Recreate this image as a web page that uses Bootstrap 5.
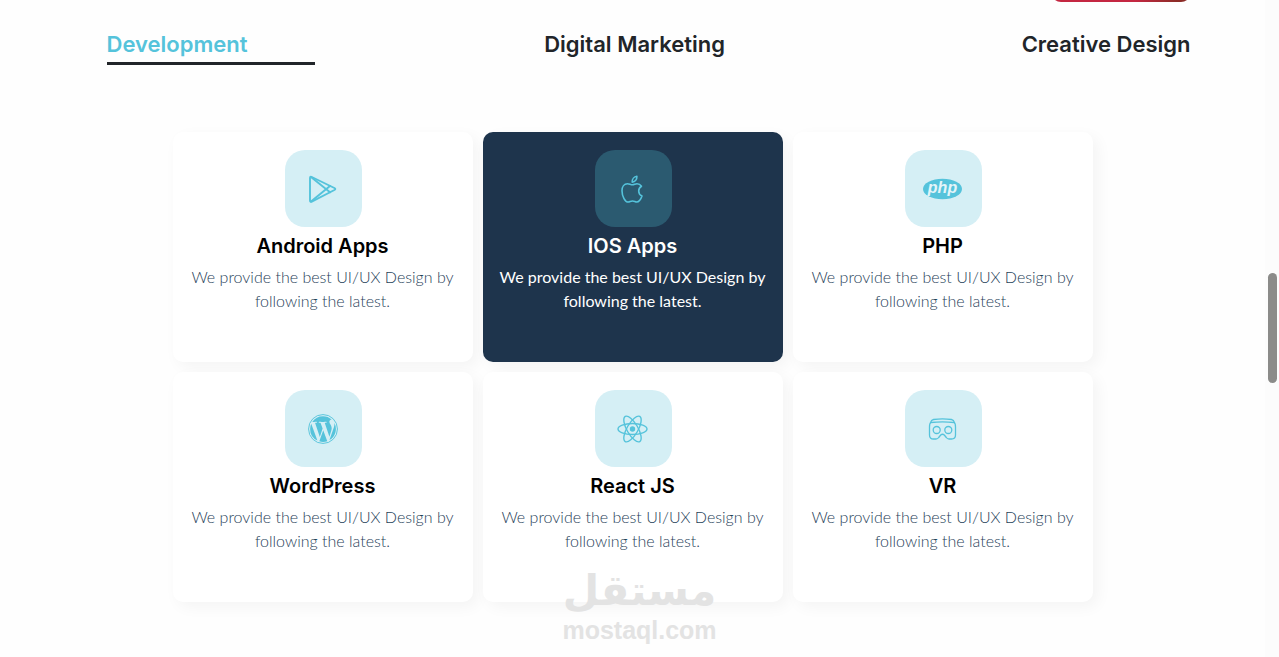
<!DOCTYPE html>
<html lang="en">
<head>
<meta charset="utf-8">
<meta name="viewport" content="width=device-width, initial-scale=1">
<title>Services</title>
<link href="https://cdn.jsdelivr.net/npm/bootstrap@5.3.0/dist/css/bootstrap.min.css" rel="stylesheet">
<style>
  :root { --aqua: #55c3db; --navy: #1e344c; }
  body { font-family: Lato, "Liberation Sans", sans-serif; background: #fefefe; }
  .page-column { min-width: 0; }
  .hero-tail { height: 2px; }
  .cta { width: 140px; height: 44px; border: 0; border-radius: 10px; background: linear-gradient(90deg, #c42741 60%, #8c2c27 90%); }
  .service-tabs { padding: 25px 0 0 32px; }
  .service-tabs a { font: 600 22px/34px Inter, sans-serif; color: #212529; text-decoration: none; height: 38px; }
  .service-tabs a.active { color: var(--aqua); }
  .service-tabs a.active::after { content: ""; position: absolute; left: 0; bottom: 0; width: 208px; height: 3px; background: #212529; }
  .services { max-width: 920px; gap: 10px; margin-top: 67px; display: grid; grid-template-columns: repeat(auto-fit, minmax(280px, 1fr)); }
  .service { min-height: 230px; padding: 18px 12px; border-radius: 10px; background: #fff; box-shadow: 5px 5px 15px rgba(0, 0, 0, .045); }
  .service h2 { font: 600 20px/22px Inter, sans-serif; color: #000; }
  .service p { font-weight: 300; font-size: 16px; line-height: 24px; color: #1f4259; max-width: 270px; }
  .service.featured { background: var(--navy); }
  .service.featured h2, .service.featured p { color: #fff; }
  .service.featured p { font-weight: 400; }
  .tile { width: 77px; height: 77px; margin-left: 1px; border-radius: 20px; background: #d5eff5; color: var(--aqua); }
  .featured .tile { background: #2b5a70; }
  .line-art { fill: none; stroke: currentColor; stroke-linecap: round; stroke-linejoin: round; }
  .scroll-track { width: 14px; background: #fcfcfc; z-index: 3; }
  .scroll-thumb { width: 9px; height: 110px; margin: 273px 2px 0 3px; border-radius: 5px; background: #8b8b89; }
  .watermark { z-index: 2; color: #e3e3e3; pointer-events: none; bottom: 11px; }
  .watermark-ar { font: 700 42px/46px "DejaVu Sans", sans-serif; }
  .watermark-en { font: 700 25px/32px "Liberation Sans", sans-serif; }
</style>
</head>
<body>
<div class="d-flex min-vh-100 position-relative">
  <div class="page-column flex-grow-1">
    <header class="container">
      <div class="hero-tail overflow-hidden d-flex justify-content-end align-items-end">
        <button class="cta flex-shrink-0" type="button" aria-label="Get started"></button>
      </div>
    </header>
    <main class="container">
      <nav class="service-tabs d-flex flex-wrap justify-content-between" aria-label="Service groups">
        <a class="active position-relative" href="#development" aria-current="true">Development</a>
        <a href="#marketing">Digital Marketing</a>
        <a href="#design">Creative Design</a>
      </nav>
      <section class="services mx-auto text-center" id="development">
        <article class="service d-flex flex-column align-items-center">
          <div class="tile d-flex align-items-center justify-content-center">
            <svg class="line-art" width="40" height="40" viewBox="0 0 40 40" stroke-width="1.900" aria-hidden="true"><path d="M7 9.2q0-2 1.800-1.200L31.400 19q1.800 1 0 2L8.800 32.600Q7 33.500 7 31.500Z"/><path d="M8 8 27 23.300M8 32.500 27 16.900"/></svg>
          </div>
          <h2 class="mt-2 mb-2">Android Apps</h2>
          <p class="m-0">We provide the best UI/UX Design by following the latest.</p>
        </article>
        <article class="service featured d-flex flex-column align-items-center">
          <div class="tile d-flex align-items-center justify-content-center">
            <svg class="line-art" width="40" height="40" viewBox="0 0 40 40" stroke-width="1.600" aria-hidden="true"><path d="M19.500 15.800c-1.800 0-3.200-1.100-5-1.100-3.300 0-5.500 3-5.500 7 0 5.800 3.200 11.300 6.200 11.300 1.500 0 2.600-1 4.300-1s2.700 1 4.200 1c2.300 0 4.400-3.400 5.300-6-2-.9-3.300-2.700-3.300-5 0-2 1-3.700 2.800-4.800-1.100-1.600-2.700-2.500-4.500-2.500-1.700 0-2.900 1.100-4.500 1.100Z"/><path d="M19.200 13.200c-.2-3 1.900-5.500 4.700-5.900.2 3-1.800 5.600-4.700 5.900Z"/></svg>
          </div>
          <h2 class="mt-2 mb-2">IOS Apps</h2>
          <p class="m-0">We provide the best UI/UX Design by following the latest.</p>
        </article>
        <article class="service d-flex flex-column align-items-center">
          <div class="tile d-flex align-items-center justify-content-center">
            <svg width="40" height="40" viewBox="0 0 40 40" aria-hidden="true"><ellipse cx="19.500" cy="20" rx="19.500" ry="10.300" fill="currentColor"/><text x="19.500" y="24" text-anchor="middle" font-family="Liberation Sans, sans-serif" font-size="16" font-weight="700" font-style="italic" fill="#e4f5f9">php</text></svg>
          </div>
          <h2 class="mt-2 mb-2">PHP</h2>
          <p class="m-0">We provide the best UI/UX Design by following the latest.</p>
        </article>
        <article class="service d-flex flex-column align-items-center">
          <div class="tile d-flex align-items-center justify-content-center">
            <svg width="30" height="30" viewBox="0 0 16 16" fill="currentColor" aria-hidden="true"><path d="M12.633 7.653c0-.848-.305-1.435-.566-1.892l-.08-.13c-.317-.51-.594-.958-.594-1.480 0-.63.478-1.218 1.152-1.218q.03 0 .058.003l.031.003A6.840 6.840 0 0 0 8 1.137 6.860 6.860 0 0 0 2.266 4.230c.16.005.313.009.442.009.717 0 1.828-.087 1.828-.087.37-.022.414.521.044.565 0 0-.371.044-.785.065l2.500 7.434 1.500-4.506-1.070-2.929c-.369-.022-.719-.065-.719-.065-.37-.022-.326-.588.043-.566 0 0 1.134.087 1.808.087.718 0 1.830-.087 1.830-.087.37-.022.413.522.043.566 0 0-.372.043-.785.065l2.480 7.377.684-2.287.054-.173c.27-.86.469-1.495.469-2.046zM1.137 8a6.860 6.860 0 0 0 3.868 6.176L1.730 5.206A6.800 6.800 0 0 0 1.137 8"/><path d="M6.061 14.583 8.121 8.600l2.109 5.780q.02.05.049.094a6.850 6.850 0 0 1-4.218.109m7.960-9.876q.046.328.047.706c0 .696-.13 1.479-.522 2.458l-2.096 6.060a6.860 6.860 0 0 0 2.572-9.224z"/><circle cx="8" cy="8" r="7.700" fill="none" stroke="currentColor" stroke-width=".5"/></svg>
          </div>
          <h2 class="mt-2 mb-2">WordPress</h2>
          <p class="m-0">We provide the best UI/UX Design by following the latest.</p>
        </article>
        <article class="service d-flex flex-column align-items-center">
          <div class="tile d-flex align-items-center justify-content-center">
            <svg class="line-art" width="40" height="40" viewBox="0 0 40 40" stroke-width="1.400" aria-hidden="true"><ellipse cx="19.500" cy="20" rx="14.500" ry="5.500"/><ellipse cx="19.500" cy="20" rx="14.500" ry="5.500" transform="rotate(60 19.500 20)"/><ellipse cx="19.500" cy="20" rx="14.500" ry="5.500" transform="rotate(120 19.500 20)"/><circle cx="19.500" cy="20" r="2.700" fill="currentColor" stroke="none"/></svg>
          </div>
          <h2 class="mt-2 mb-2">React JS</h2>
          <p class="m-0">We provide the best UI/UX Design by following the latest.</p>
        </article>
        <article class="service d-flex flex-column align-items-center">
          <div class="tile d-flex align-items-center justify-content-center">
            <svg class="line-art" width="40" height="40" viewBox="0 0 40 40" stroke-width="1.300" aria-hidden="true"><path d="M6.500 18q0-4 1.500-4.500 11.500-1.300 23 0 1.500.5 1.500 4.500v8q0 4-4 4H26q-1.700 0-2.700-1.500l-2-2.500q-1.800-1.600-3.600 0l-2 2.500Q14.700 30 13 30h-2.500q-4 0-4-4Z"/><path d="M7.500 13.600q.7-2.700 3-3.100 9-1.200 18 0 2.300.4 3 3.100"/><circle cx="13.700" cy="21" r="3.500"/><circle cx="25.300" cy="21" r="3.500"/></svg>
          </div>
          <h2 class="mt-2 mb-2">VR</h2>
          <p class="m-0">We provide the best UI/UX Design by following the latest.</p>
        </article>
      </section>
    </main>
  </div>
  <div class="scroll-track flex-shrink-0" aria-hidden="true"><div class="scroll-thumb"></div></div>
  <div class="watermark position-absolute start-50 translate-middle-x text-center">
    <div class="watermark-ar" lang="ar" dir="rtl">مستقل</div>
    <div class="watermark-en">mostaql.com</div>
  </div>
</div>
<script src="https://cdn.jsdelivr.net/npm/bootstrap@5.3.0/dist/js/bootstrap.bundle.min.js"></script>
</body>
</html>
